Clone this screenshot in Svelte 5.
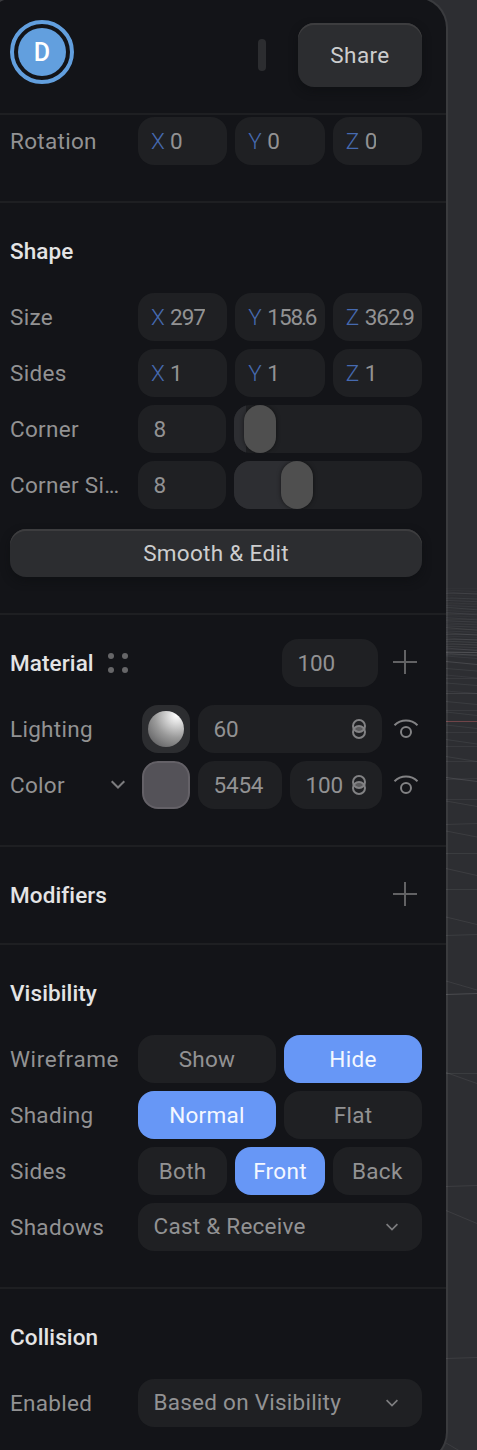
<script>
  const size = [['X', '297'], ['Y', '158', '63'], ['Z', '362', '9']];
  const ones = [['X', '1'], ['Y', '1'], ['Z', '1']];
  const zeros = [['X', '0'], ['Y', '0'], ['Z', '0']];

  // [y at the panel edge, y at the window edge, opacity]
  const fine = Array.from({ length: 40 }, (_, i) => [588.5 + i * 1.7, 588.5 + i * 1.7 + (i % 3) * 1.3, 0.03 + i * 0.0015 + (i % 4) * 0.025]);
  const lines = [
    ...fine,
    [652.5, 652.5, 0.22], [656, 658.5, 0.1], [661.5, 664.5, 0.22], [668.5, 671, 0.12], [675, 678, 0.1],
    [678.5, 678.5, 0.1], [683, 685.5, 0.12], [693.5, 693.5, 0.15], [691, 693.5, 0.1], [701.5, 704.5, 0.12],
    [710.5, 710.5, 0.1], [712, 715.5, 0.12], [725, 728.5, 0.12], [732.5, 732.5, 0.1], [739.5, 744, 0.12],
    [746.5, 746.5, 0.1], [756.5, 761.5, 0.12], [761.5, 761.5, 0.1], [777.5, 781.5, 0.2], [779.5, 778.5, 0.1],
    [799.5, 799.5, 0.1], [801, 806.5, 0.13], [824.5, 823.5, 0.11], [831, 837, 0.13], [853.5, 853.5, 0.12],
    [868.5, 875.5, 0.13], [889.5, 889.5, 0.12], [917, 924.5, 0.13], [935.5, 934.5, 0.12], [981, 990, 0.13],
    [994.5, 993.5, 0.25], [1073.5, 1073.5, 0.12], [1072.5, 1083.5, 0.13], [1186.5, 1185.5, 0.13],
    [1210.5, 1223.5, 0.13], [1358.5, 1357.5, 0.13], [1443, 1461, 0.13]
  ];
</script>

{#snippet axes(values)}
  <div class="cols three">
    {#each values as [axis, value, decimals]}
      <div class="field axis"><i>{axis}</i><span class="value">{value}{#if decimals}<span class="point">.</span>{decimals}{/if}</span></div>
    {/each}
  </div>
{/snippet}

{#snippet plus()}
  <svg class="plus" viewBox="0 0 24 24"><path d="M12 0V24M0 12H24" /></svg>
{/snippet}

{#snippet eye()}
  <svg class="eye" viewBox="0 0 24 24"><path d="M.5 8.2C7 1.9 17 1.9 23.5 8.2" /><circle cx="12" cy="15" r="5" /></svg>
{/snippet}

{#snippet link()}
  <svg class="link" viewBox="0 0 14 20">
    <ellipse class="core" cx="7" cy="10" rx="5" ry="2.800" />
    <circle cx="7" cy="7" r="6" /><circle cx="7" cy="13" r="6" />
  </svg>
{/snippet}

{#snippet chevron()}
  <svg class="chevron" viewBox="0 0 14 9"><path d="M.7 1.200L7 7.500L13.300 1.200" /></svg>
{/snippet}

<div class="viewport">
  <svg class="scene" viewBox="0 0 477 1450">
    {#each lines as [a, b, o]}
      <path d="M446 {a}L477 {b}" stroke="#a0a1a5" stroke-opacity={o} />
    {/each}
    <path d="M446 721.500H477" stroke="#704448" />
  </svg>

  <main class="panel">
    <header>
      <div class="avatar"><b>D</b></div>
      <div class="grip"></div>
      <button class="raised share">Share</button>
    </header>

    <section class="first">
      <div class="row"><label>Rotation</label>{@render axes(zeros)}</div>
    </section>

    <section>
      <h2>Shape</h2>
      <div class="rows">
        <div class="row"><label>Size</label>{@render axes(size)}</div>
        <div class="row"><label>Sides</label>{@render axes(ones)}</div>
        <div class="row">
          <label>Corner</label>
          <div class="cols slide"><div class="field num">8</div><div class="slider"><span class="fill" style="width:12px"></span><span class="thumb" style="left:10px"></span></div></div>
        </div>
        <div class="row">
          <label>Corner Si<span class="dotted">...</span></label>
          <div class="cols slide"><div class="field num">8</div><div class="slider"><span class="fill" style="width:60px"></span><span class="thumb" style="left:47px"></span></div></div>
        </div>
      </div>
      <button class="raised wide">Smooth &amp; Edit</button>
    </section>

    <section>
      <div class="title">
        <h2>Material</h2>
        <svg class="dots" viewBox="0 0 20 20"><circle cx="3" cy="3" r="3" /><circle cx="17" cy="3" r="3" /><circle cx="3" cy="17" r="3" /><circle cx="17" cy="17" r="3" /></svg>
        <div class="field num total">100</div>
        {@render plus()}
      </div>
      <div class="rows">
        <div class="row layer">
          <label>Lighting</label>
          <div class="swatch light"><span></span></div>
          <div class="field num grow">60{@render link()}</div>
          {@render eye()}
        </div>
        <div class="row layer">
          <label class="pick">Color{@render chevron()}</label>
          <div class="swatch color"></div>
          <div class="field num hex">5454</div>
          <div class="field num grow">100{@render link()}</div>
          {@render eye()}
        </div>
      </div>
    </section>

    <section class="short">
      <div class="title"><h2>Modifiers</h2><span class="spacer"></span>{@render plus()}</div>
    </section>

    <section>
      <h2>Visibility</h2>
      <div class="rows">
        <div class="row"><label class="loose">Wireframe</label><div class="cols two"><button>Show</button><button class="on">Hide</button></div></div>
        <div class="row"><label>Shading</label><div class="cols two"><button class="on">Normal</button><button>Flat</button></div></div>
        <div class="row"><label>Sides</label><div class="cols three"><button>Both</button><button class="on">Front</button><button>Back</button></div></div>
        <div class="row"><label>Shadows</label><div class="field select"><span>Cast &amp; Receive</span>{@render chevron()}</div></div>
      </div>
    </section>

    <section>
      <h2>Collision</h2>
      <div class="row"><label>Enabled</label><div class="field select"><span>Based on Visibility</span>{@render chevron()}</div></div>
    </section>
  </main>
</div>

<style>
  :global(body) { margin: 0; background: #2d2e32; }
  * { box-sizing: border-box; }
  .viewport { position: relative; width: 477px; height: 1450px; overflow: hidden; background: #2d2e32; font: 400 22.5px/48px Roboto, "Liberation Sans", sans-serif; letter-spacing: .3px; color: #929293; }
  .scene { position: absolute; inset: 0; width: 477px; height: 1450px; fill: none; }
  .panel { position: relative; width: 465px; height: 1468px; margin: -4px 0 0 -17px; padding: 2px 0 0 15px; border: 2px solid #ffffff10; border-radius: 32px; background: #131418 padding-box; overflow: hidden; }
  header { display: flex; align-items: flex-start; height: 113px; padding: 20px 24px 0 10px; }
  .avatar { width: 64px; height: 64px; border: 4px solid #629fde; border-radius: 50%; padding: 4px; }
  .avatar b { display: block; height: 48px; border-radius: 50%; background: #629fde; color: #fff; font-size: 25px; font-weight: 500; line-height: 50px; text-align: center; letter-spacing: 0; }
  .grip { width: 8px; height: 32px; margin: 19px 32px 0 auto; border-radius: 4px; background: #2c2d30; }
  button { display: block; height: 48px; padding: 0; border: 0; border-radius: 16px; background: #1f2023; color: #929293; font: inherit; letter-spacing: .3px; text-align: center; }
  .raised { background: #2c2d30; color: #cdcdce; box-shadow: inset 0 2px #3d3d3f, 0 4px 8px #0c0d1080; }
  .share { width: 124px; height: 64px; margin-top: 3px; letter-spacing: .4px; }
  .wide { width: 412px; margin-top: 20px; }
  section { padding: 24px 24px 36px 10px; border-top: 2px solid #1e1f22; }
  .first { padding-top: 2px; }
  .short { padding-bottom: 24px; }
  h2 { margin: 0 0 18px; height: 48px; font-size: 22.5px; line-height: 48px; font-weight: 500; color: #e4e4e5; letter-spacing: .1px; }
  .title { display: flex; align-items: center; }
  .title h2 { margin: 0; }
  .title + .rows { margin-top: 18px; }
  .dots { width: 20px; height: 20px; margin-left: auto; margin-right: 154px; fill: #666668; }
  .total { width: 96px; margin-right: 15px; }
  .spacer { flex: 1; }
  svg { display: block; flex: none; overflow: visible; }
  .plus { width: 24px; height: 24px; margin: 0 5px 2px 0; fill: none; stroke: #626264; stroke-width: 2; }
  .eye { width: 24px; height: 24px; margin: 0 4px; fill: none; stroke: #828284; stroke-width: 2; }
  .link { width: 14px; height: 20px; margin-left: auto; fill: none; stroke: #828284; stroke-width: 2; }
  .core { fill: #5a5a5c; stroke: none; }
  .chevron { width: 14px; height: 9px; fill: none; stroke: #7c7c7e; stroke-width: 2; }
  .rows { display: flex; flex-direction: column; gap: 8px; }
  .row { display: flex; height: 48px; }
  label { width: 128px; height: 48px; flex: none; white-space: nowrap; }
  .loose { letter-spacing: .6px; }
  .dotted { letter-spacing: -1.3px; }
  .cols { display: grid; gap: 8px; width: 284px; }
  .three { grid-template-columns: repeat(3, 1fr); }
  .two { grid-template-columns: 1fr 1fr; }
  .slide { grid-template-columns: 88px 1fr; }
  .on { background: #6797f6; color: #f4f7ff; }
  .field { height: 48px; border-radius: 16px; background: #1f2023; min-width: 0; }
  .num { display: flex; align-items: center; padding: 0 16px 0 15.5px; letter-spacing: -.2px; }
  .axis { display: flex; padding: 0 8px 0 13px; letter-spacing: -1px; }
  .axis i { width: 19px; flex: none; font-style: normal; font-weight: 300; color: #466ab0; letter-spacing: 0; }
  .value { overflow: hidden; white-space: nowrap; }
  .point { margin: 0 -1.2px; }
  .slider { position: relative; height: 48px; border-radius: 16px; overflow: hidden; background: #1f2023; }
  .fill { display: block; height: 48px; background: #2d2e32; }
  .thumb { position: absolute; top: 0; width: 32px; height: 48px; border-radius: 16px; background: #4f4f4f; box-shadow: 0 0 4px #0008; }
  .layer { align-items: center; gap: 8px; }
  .layer label { width: 124px; }
  .pick { display: flex; align-items: center; justify-content: space-between; padding: 0 9px 1px 0; }
  .swatch { width: 48px; height: 48px; border-radius: 16px; flex: none; background: #2c2d30; }
  .light { padding: 6px; }
  .light span { display: block; width: 36px; height: 36px; border-radius: 50%; background: radial-gradient(circle at 80% 12%, #fff 0, #dadada 20%, #9a9a9a 52%, #5b5b5d 92%); }
  .color { background: #545258; border: 2px solid #646167; }
  .grow { flex: 1; }
  .hex { width: 84px; }
  .select { display: flex; align-items: center; justify-content: space-between; width: 284px; padding: 0 24px 0 15.5px; white-space: nowrap; letter-spacing: .25px; line-height: 46px; }
  .select span { height: 48px; }
  .select .chevron { width: 12px; height: 8px; }
</style>
